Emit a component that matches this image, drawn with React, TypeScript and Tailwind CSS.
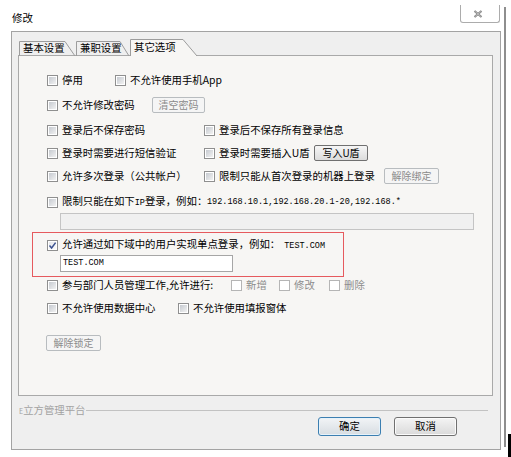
import React from "react";

function Cb({ checked = false, disabled = false }: { checked?: boolean; disabled?: boolean }) {
  if (disabled) {
    return <span className="block w-[11px] h-[11px] shrink-0 border border-[#b5b5b5] bg-white" />;
  }
  return (
    <span className="flex w-[11px] h-[11px] shrink-0 border border-[#8f8f8f] bg-white p-[1px]">
      <span
        className={
          "relative flex-1 " +
          (checked ? "bg-linear-to-br from-[#e4e6ea] to-[#fbfbfb]" : "bg-linear-to-br from-[#c6cad0] to-[#f2f2f2]")
        }
      >
        {checked && (
          <svg className="absolute left-[-1px] top-[-1px]" width="9" height="9" viewBox="0 0 9 9">
            <path d="M1.5 4.6 L3.6 7 L7.6 1.6" fill="none" stroke="#3d5390" strokeWidth="1.5" />
          </svg>
        )}
      </span>
    </span>
  );
}

function Item({
  w,
  checked,
  disabled,
  children,
}: {
  w?: string;
  checked?: boolean;
  disabled?: boolean;
  children: React.ReactNode;
}) {
  return (
    <div className={"flex items-center gap-[4px] shrink-0 " + (w ?? "")}>
      <Cb checked={checked} disabled={disabled} />
      <span className={"whitespace-nowrap " + (disabled ? "text-[#8d8d8d]" : "text-black")}>{children}</span>
    </div>
  );
}

function SmallBtn({ w, disabled, children }: { w: string; disabled?: boolean; children: React.ReactNode }) {
  return (
    <div
      className={
        "flex items-center justify-center h-[16px] shrink-0 rounded-[2px] border text-[10px] " +
        w +
        " " +
        (disabled
          ? "border-[#b8bcbf] bg-[#f5f5f5] text-[#8a8a8a]"
          : "border-[#707070] bg-linear-to-b from-[#f6f6f6] to-[#dcdcdc] text-black")
      }
    >
      {children}
    </div>
  );
}

function Tab({
  w,
  h,
  pts,
  selected,
  children,
}: {
  w: number;
  h: number;
  pts: string;
  selected?: boolean;
  children: React.ReactNode;
}) {
  return (
    <div className="relative shrink-0" style={{ width: w, height: h }}>
      <svg className="absolute left-0 top-0" width={w} height={h} viewBox={`0 0 ${w} ${h}`}>
        {selected && <polygon points={pts} fill="#f7f6f4" />}
        <polyline points={pts} fill="none" stroke="#9c9c9c" strokeWidth="1" />
      </svg>
      <div className={"relative pl-[4px] whitespace-nowrap " + (selected ? "pt-[3px]" : "pt-[2px]")}>{children}</div>
    </div>
  );
}

export default function App() {
  const mono = "font-['Liberation_Mono',monospace] text-[8.5px]";
  return (
    <div className="flex w-[511px] h-[457px] bg-white overflow-hidden font-['Noto_Sans_CJK_SC',sans-serif] text-[10.4px] leading-none text-black">
      {/* main column */}
      <div className="w-[504px] shrink-0 flex flex-col">
        {/* header */}
        <div className="flex h-[31px] shrink-0">
          <div className="pl-[12px] pt-[13px] text-[10.5px]">修改</div>
          <div className="ml-auto mr-[4px] mt-[5px] w-[40px] h-[18px] border border-t-0 border-[#acacac] rounded-b-[3px] flex items-center justify-center pr-[5px]">
            <svg width="10" height="8" viewBox="0 0 10 8">
              <path d="M1.5 1 L8.5 7 M8.5 1 L1.5 7" stroke="#7a7a7a" strokeWidth="2" />
              <path d="M1.5 1 L8.5 7 M8.5 1 L1.5 7" stroke="#e6e6e6" strokeWidth="0.6" />
            </svg>
          </div>
        </div>

        {/* outer panel */}
        <div className="ml-[11px] w-[490px] h-[419px] border border-[#a3a3a3] bg-[#efefef] pt-[7px] pl-[6px] flex flex-col">
          {/* tabs */}
          <div className="flex items-end h-[17px] ml-[1px] -mb-[1px] relative z-10">
            <Tab w={57} h={15} pts="0.5,15 0.5,0.5 46,0.5 56,15">基本设置</Tab>
            <Tab w={54} h={15} pts="0.5,15 0.5,0.5 44,0.5 53,15">兼职设置</Tab>
            <Tab w={68} h={17} pts="0.5,17 0.5,0.5 53,0.5 67,17" selected>
              其它选项
            </Tab>
          </div>

          {/* content panel */}
          <div className="w-[475px] h-[341px] shrink-0 border border-[#a9a9a9] bg-[#f7f6f4] pl-[28px] flex flex-col">
            <div className="flex items-center h-[16px] mt-[16px]">
              <Item w="w-[68px]">停用</Item>
              <Item>不允许使用手机App</Item>
            </div>
            <div className="flex items-center h-[16px] mt-[9px]">
              <Item w="w-[105px]">不允许修改密码</Item>
              <SmallBtn w="w-[53px]" disabled>
                清空密码
              </SmallBtn>
            </div>
            <div className="flex items-center h-[16px] mt-[9px]">
              <Item w="w-[157px]">登录后不保存密码</Item>
              <Item>登录后不保存所有登录信息</Item>
            </div>
            <div className="flex items-center h-[16px] mt-[7px]">
              <Item w="w-[157px]">登录时需要进行短信验证</Item>
              <Item w="w-[110px]">登录时需要插入U盾</Item>
              <SmallBtn w="w-[54px]">写入U盾</SmallBtn>
            </div>
            <div className="flex items-center h-[16px] mt-[7px]">
              <Item w="w-[157px]">允许多次登录（公共帐户）</Item>
              <Item w="w-[180px]">限制只能从首次登录的机器上登录</Item>
              <SmallBtn w="w-[55px]" disabled>
                解除绑定
              </SmallBtn>
            </div>
            <div className="flex items-center h-[16px] mt-[10px]">
              <div className="flex items-center gap-[4px]">
                <Cb />
                <span className="inline-block w-[145px] whitespace-nowrap">
                  限制只能在如下<span className={mono}>IP</span>登录，例如：
                </span>
                <span className={mono + " -ml-[4px] whitespace-nowrap"}>192.168.10.1,192.168.20.1-20,192.168.*</span>
              </div>
            </div>
            <div className="ml-[13px] mt-[3px] w-[414px] h-[17px] shrink-0 border border-[#c4c4c4] bg-[#f0f0f0]" />

            {/* red box */}
            <div className="-ml-[15px] mt-[2px] w-[312px] h-[45px] shrink-0 border border-[#e65a5e] pl-[14px] pt-[4px] flex flex-col">
              <div className="flex items-center h-[16px]">
                <Item checked>
                  允许通过如下域中的用户实现单点登录，例如：<span className={mono + " ml-[4px]"}>TEST.COM</span>
                </Item>
              </div>
              <div className="ml-[13px] mt-[2px] w-[173px] h-[17px] border border-[#a6a6a6] bg-white flex items-center pl-[2px]">
                <span className={mono}>TEST.COM</span>
              </div>
            </div>

            <div className="flex items-center h-[16px]">
              <Item w="w-[184px]">参与部门人员管理工作,允许进行:</Item>
              <Item w="w-[48px]" disabled>
                新增
              </Item>
              <Item w="w-[50px]" disabled>
                修改
              </Item>
              <Item disabled>删除</Item>
            </div>
            <div className="flex items-center h-[16px] mt-[7px]">
              <Item w="w-[131px]">不允许使用数据中心</Item>
              <Item>不允许使用填报窗体</Item>
            </div>
            <div className="flex mt-[19px] -ml-[1px]">
              <SmallBtn w="w-[55px]" disabled>
                解除锁定
              </SmallBtn>
            </div>
          </div>

          {/* footer */}
          <div className="flex items-center h-[12px] mt-[8px] ml-[1px] mr-[12px]">
            <span className="text-[#a3a3a3] whitespace-nowrap">
              <span className="text-[7px]">E</span>立方管理平台
            </span>
            <div className="flex-1 h-px bg-[#c2c2c2] ml-[1px]" />
          </div>
          <div className="flex justify-end gap-[13px] mt-[1px] pr-[43px]">
            <div className="flex items-center justify-center w-[63px] h-[19px] rounded-[3px] border border-[#3c7fb1] bg-linear-to-b from-[#f2f4f6] to-[#d7dde2] text-[10.4px] shadow-[inset_0_0_0_1px_#e6f2fa]">
              确定
            </div>
            <div className="flex items-center justify-center w-[63px] h-[19px] rounded-[3px] border border-[#707070] bg-linear-to-b from-[#f4f4f4] to-[#dadada] text-[10.4px] shadow-[inset_0_0_0_1px_#fbfbfb]">
              取消
            </div>
          </div>
        </div>
      </div>

      {/* right chrome */}
      <div className="w-[2px] h-[440px] mt-[7px] shrink-0 bg-[#8e8e8e]" />
      <div className="w-[3px] h-[23px] ml-[2px] self-end shrink-0 bg-black" />
    </div>
  );
}
